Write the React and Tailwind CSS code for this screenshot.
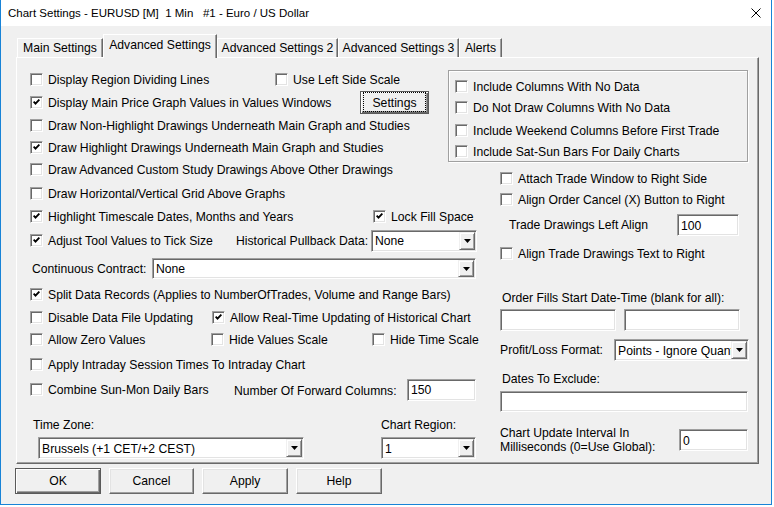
import React from "react";

function Box({ checked }) {
  return (
    <span className="w-[13px] h-[13px] shrink-0 bg-white border border-t-[#a0a0a0] border-l-[#a0a0a0] border-b-white border-r-white shadow-[inset_1px_1px_0_#696969,inset_-1px_-1px_0_#e3e3e3] flex items-center justify-center">
      {checked && (
        <svg width="7" height="7" viewBox="0 0 7 7" className="block">
          <path d="M0.6 2.6 L2.5 4.6 L6.4 0.6" fill="none" stroke="#000" strokeWidth="1.9" />
        </svg>
      )}
    </span>
  );
}

function Check({ checked, label, className = "" }) {
  return (
    <div className={"flex items-center h-[18px] shrink-0 " + className}>
      <Box checked={checked} />
      <span className="ml-[5px] pt-[2px] whitespace-nowrap leading-none">{label}</span>
    </div>
  );
}

function Arrow() {
  return (
    <span className="w-[16px] h-full shrink-0 bg-[#f0f0f0] border border-t-[#f0f0f0] border-l-[#f0f0f0] border-b-[#696969] border-r-[#696969] shadow-[inset_1px_1px_0_#fff,inset_-1px_-1px_0_#a0a0a0] flex items-center justify-center">
      <svg width="7" height="4" viewBox="0 0 7 4" className="block">
        <polygon points="0,0 7,0 3.5,4" fill="#000" />
      </svg>
    </span>
  );
}

function Field({ value, className = "", dropdown }) {
  return (
    <div
      className={
        "bg-white border border-t-[#a0a0a0] border-l-[#a0a0a0] border-b-white border-r-white shadow-[inset_1px_1px_0_#696969,inset_-1px_-1px_0_#e3e3e3] p-[1px] flex items-stretch shrink-0 " +
        className
      }
    >
      <span className="flex-1 flex items-center pl-[2px] pt-[2px] whitespace-nowrap overflow-hidden leading-none">{value}</span>
      {dropdown && <Arrow />}
    </div>
  );
}

function Btn({ children, def, className = "" }) {
  return (
    <div
      className={
        "bg-[#f0f0f0] flex items-center justify-center leading-none shrink-0 " +
        (def
          ? "border border-[#5a5a5a] shadow-[inset_1px_1px_0_#fff,inset_-1px_-1px_0_#696969,inset_-2px_-2px_0_#a0a0a0] "
          : "border border-t-white border-l-white border-b-[#696969] border-r-[#696969] shadow-[inset_-1px_-1px_0_#a0a0a0,inset_1px_1px_0_#e3e3e3] ") +
        className
      }
    >
      {children}
    </div>
  );
}

function Tab({ label, selected, className = "" }) {
  return (
    <div
      className={
        "flex items-center justify-center bg-[#f0f0f0] border-t border-l border-t-white border-l-white border-r border-r-[#696969] shadow-[inset_-1px_0_0_#a0a0a0] whitespace-nowrap leading-none shrink-0 " +
        (selected ? "h-[24px] relative z-10 pb-[3px]" : "h-[19px] mt-[4px] pt-[1px]") +
        " " +
        className
      }
    >
      {label}
    </div>
  );
}

export default function App() {
  return (
    <div className="w-[774px] h-[507px] bg-white overflow-hidden font-['Liberation_Sans',Arial,sans-serif] text-[12.2px] text-black">
      <div className="w-[772px] h-[505px] border-l border-r border-b border-[#1883d7] bg-[#f0f0f0] flex flex-col">
        {/* title bar */}
        <div className="h-[26px] bg-white flex items-center shrink-0 pl-[7px]">
          <span className="whitespace-pre text-[11.5px] leading-none pt-[1px]">
            Chart Settings - EURUSD [M]  1 Min   #1 - Euro / US Dollar
          </span>
          <svg width="10" height="10" viewBox="0 0 10 10" className="ml-auto mr-[10px]">
            <path d="M0.5 0.5 L9.5 9.5 M9.5 0.5 L0.5 9.5" stroke="#000" strokeWidth="1" />
          </svg>
        </div>

        {/* tabs */}
        <div className="flex items-start ml-[16px] mt-[8px] h-[24px] mb-[-1px] relative z-10">
          <Tab label="Main Settings" className="w-[86px]" />
          <Tab label="Advanced Settings" selected className="w-[114px]" />
          <Tab label="Advanced Settings 2" className="w-[121px]" />
          <Tab label="Advanced Settings 3" className="w-[121px]" />
          <Tab label="Alerts" className="w-[43px]" />
        </div>

        {/* panel */}
        <div className="ml-[15px] w-[743px] h-[407px] shrink-0 border border-t-white border-l-white border-b-[#696969] border-r-[#696969] shadow-[inset_-1px_-1px_0_#a0a0a0] pl-[13px] pt-[12px] flex">
          {/* left column */}
          <div className="w-[418px] shrink-0 flex flex-col">
            <div className="flex items-center h-[18px]">
              <Check label="Display Region Dividing Lines" className="w-[245px]" />
              <Check label="Use Left Side Scale" />
            </div>
            <div className="flex items-center h-[22px] mt-[3px]">
              <Check checked label="Display Main Price Graph Values in Values Windows" className="w-[330px]" />
              <Btn def className="w-[69px] h-[23px] relative">
                <span className="border border-dotted border-black px-[8px] pt-[4px] pb-[2px]">Settings</span>
              </Btn>
            </div>
            <Check label="Draw Non-Highlight Drawings Underneath Main Graph and Studies" className="mt-[3px]" />
            <Check checked label="Draw Highlight Drawings Underneath Main Graph and Studies" className="mt-[4px]" />
            <Check label="Draw Advanced Custom Study Drawings Above Other Drawings" className="mt-[4px]" />
            <Check label="Draw Horizontal/Vertical Grid Above Graphs" className="mt-[6px]" />
            <div className="flex items-center h-[18px] mt-[5px]">
              <Check checked label="Highlight Timescale Dates, Months and Years" className="w-[343px]" />
              <Check checked label="Lock Fill Space" />
            </div>
            <div className="flex items-center h-[21px] mt-[5px]">
              <Check checked label="Adjust Tool Values to Tick Size" className="w-[206px]" />
              <span className="w-[135px] pt-[1px] whitespace-nowrap leading-none shrink-0">Historical Pullback Data:</span>
              <Field value="None" dropdown className="w-[106px] h-[22px]" />
            </div>
            <div className="flex items-center h-[21px] mt-[7px]">
              <span className="w-[122px] pl-[2px] pt-[1px] whitespace-nowrap leading-none shrink-0">Continuous Contract:</span>
              <Field value="None" dropdown className="w-[324px] h-[21px]" />
            </div>
            <Check checked label="Split Data Records (Applies to NumberOfTrades, Volume and Range Bars)" className="mt-[6px]" />
            <div className="flex items-center h-[18px] mt-[5px]">
              <Check label="Disable Data File Updating" className="w-[182px]" />
              <Check checked label="Allow Real-Time Updating of Historical Chart" />
            </div>
            <div className="flex items-center h-[18px] mt-[4px]">
              <Check label="Allow Zero Values" className="w-[181px]" />
              <Check label="Hide Values Scale" className="w-[161px]" />
              <Check label="Hide Time Scale" />
            </div>
            <Check label="Apply Intraday Session Times To Intraday Chart" className="mt-[7px]" />
            <div className="flex items-center h-[21px] mt-[6px]">
              <Check label="Combine Sun-Mon Daily Bars" className="w-[204px]" />
              <span className="w-[173px] whitespace-nowrap leading-none shrink-0 pt-[4px]">Number Of Forward Columns:</span>
              <Field value="150" className="w-[69px] h-[22px]" />
            </div>
            <div className="flex items-center h-[16px] mt-[17px]">
              <span className="w-[351px] pl-[3px] pt-[1px] whitespace-nowrap leading-none shrink-0">Time Zone:</span>
              <span className="whitespace-nowrap leading-none pt-[1px]">Chart Region:</span>
            </div>
            <div className="flex items-center h-[22px] mt-[4px]">
              <Field value="Brussels (+1 CET/+2 CEST)" dropdown className="ml-[8px] w-[266px] h-[22px]" />
              <Field value="1" dropdown className="ml-[77px] w-[95px] h-[22px]" />
            </div>
          </div>

          {/* right column */}
          <div className="w-[300px] shrink-0 flex flex-col">
            <div className="h-[92px] shrink-0 border border-[#a0a0a0] shadow-[1px_1px_0_#fff,inset_1px_1px_0_#fff] pl-[6px] flex flex-col">
              <Check label="Include Columns With No Data" className="mt-[6px]" />
              <Check label="Do Not Draw Columns With No Data" className="mt-[3px]" />
              <Check label="Include Weekend Columns Before First Trade" className="mt-[5px]" />
              <Check label="Include Sat-Sun Bars For Daily Charts" className="mt-[3px]" />
            </div>
            <Check label="Attach Trade Window to Right Side" className="ml-[52px] mt-[7px]" />
            <Check label="Align Order Cancel (X) Button to Right" className="ml-[52px] mt-[3px]" />
            <div className="flex items-center h-[22px] mt-[6px]">
              <span className="ml-[61px] w-[168px] pt-[1px] whitespace-nowrap leading-none shrink-0">Trade Drawings Left Align</span>
              <Field value="100" className="w-[62px] h-[22px]" />
            </div>
            <Check label="Align Trade Drawings Text to Right" className="ml-[52px] mt-[8px]" />
            <div className="h-[15px] mt-[28px] ml-[54px] pt-[2px] flex items-center whitespace-nowrap leading-none">
              Order Fills Start Date-Time (blank for all):
            </div>
            <div className="flex items-center h-[22px] mt-[4px] ml-[52px] gap-[8px]">
              <Field value="" className="w-[116px] h-[22px]" />
              <Field value="" className="w-[116px] h-[22px]" />
            </div>
            <div className="flex items-center h-[22px] mt-[8px] ml-[52px]">
              <span className="w-[114px] pt-[1px] whitespace-nowrap leading-none shrink-0">Profit/Loss Format:</span>
              <Field value="Points - Ignore Quantity" dropdown className="w-[135px] h-[22px]" />
            </div>
            <div className="h-[15px] mt-[10px] ml-[54px] pt-[2px] flex items-center whitespace-nowrap leading-none">
              Dates To Exclude:
            </div>
            <Field value="" className="ml-[52px] mt-[5px] w-[248px] h-[21px]" />
            <div className="flex items-center h-[22px] mt-[17px] ml-[52px]">
              <span className="w-[179px] leading-[13.5px] pt-[1px] shrink-0">
                Chart Update Interval In
                <br />
                Milliseconds (0=Use Global):
              </span>
              <Field value="0" className="w-[69px] h-[22px]" />
            </div>
          </div>
        </div>

        {/* buttons */}
        <div className="flex items-center ml-[14px] mt-[4px] gap-[8px]">
          <Btn def className="w-[86px] h-[26px] pt-[1px]">OK</Btn>
          <Btn className="w-[85px] h-[26px] pt-[1px]">Cancel</Btn>
          <Btn className="w-[86px] h-[26px] pt-[1px]">Apply</Btn>
          <Btn className="w-[86px] h-[26px] pt-[1px]">Help</Btn>
        </div>
      </div>
    </div>
  );
}
